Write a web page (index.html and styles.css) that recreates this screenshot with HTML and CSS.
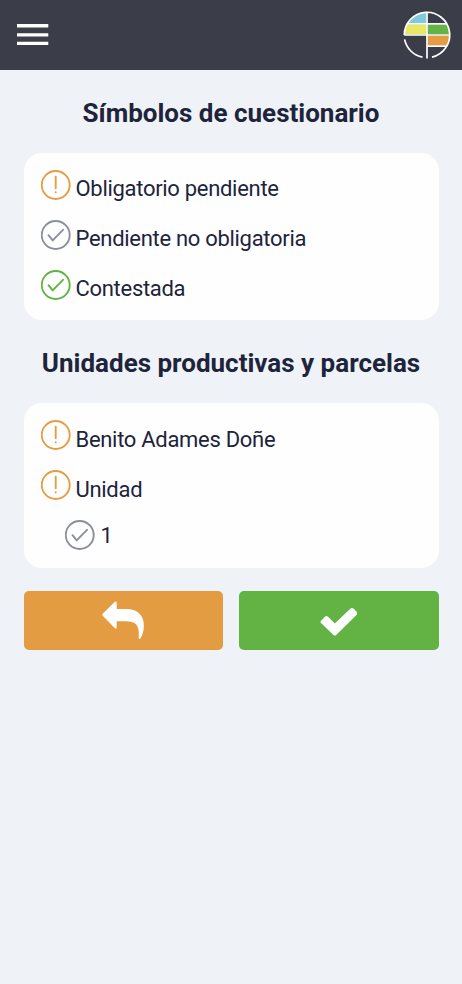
FILE: index.html
```html
<!DOCTYPE html>
<html lang="es">
<head>
<meta charset="utf-8">
<title>Símbolos de cuestionario</title>
<link rel="stylesheet" href="styles.css">
</head>
<body>
<svg class="defs" aria-hidden="true">
  <symbol id="alert" viewBox="0 0 30 30"><circle cx="14.700" cy="15" r="14"/><path d="M14.700 6.800v11.400"/><path d="M14.700 22.200v.2"/></symbol>
  <symbol id="check" viewBox="0 0 30 30"><circle cx="14.700" cy="15" r="14"/><path d="M7.500 15.200l4.200 5.200L22 9.800"/></symbol>
</svg>
<header class="topbar">
  <svg class="menu" viewBox="0 0 32 22"><path d="M0 1.800h31.300M0 10.900h31.300M0 19.400h31.300"/></svg>
  <svg class="logo" viewBox="0 0 48 48">
    <clipPath id="disc"><circle cx="24" cy="24" r="22.500"/></clipPath>
    <g clip-path="url(#disc)">
      <path fill="#7ecbdc" d="M0 0h23.500v12.500H0z"/>
      <path fill="#e9e865" d="M0 13.500h23.500v10H0z"/>
      <path fill="#63b345" d="M24.500 13.500h24v10h-24z"/>
      <path fill="#e69d42" d="M24.500 24.500h24v10h-24z"/>
    </g>
    <path class="logo-lines" d="M1.300 24A22.700 22.700 0 1 1 29 46.100M1.600 28.400A22.700 22.700 0 0 0 19.500 46.200M24 1v46.500M3.500 12.900h41M1.300 24h45.400M24 35.200h19.500"/>
  </svg>
</header>
<main>
  <h1>Símbolos de cuestionario</h1>
  <ul class="card legend">
    <li><svg class="orange"><use href="#alert"/></svg><span>Obligatorio pendiente</span></li>
    <li><svg class="gray"><use href="#check"/></svg><span>Pendiente no obligatoria</span></li>
    <li><svg class="green"><use href="#check"/></svg><span>Contestada</span></li>
  </ul>
  <h1>Unidades productivas y parcelas</h1>
  <ul class="card units">
    <li><svg class="orange"><use href="#alert"/></svg><span>Benito Adames Doñe</span></li>
    <li><svg class="orange"><use href="#alert"/></svg><span>Unidad</span></li>
    <li class="child"><svg class="gray"><use href="#check"/></svg><span>1</span></li>
  </ul>
  <div class="actions">
    <button class="back" aria-label="Volver"><svg viewBox="-0.700 0 44 40"><path d="M1 12.700L13.200.7Q15 0 15 1.800V8H24C36 8 42.200 14 42.200 25C42.200 30 40.500 34.500 38.700 37.500Q37.500 38.500 37 37C38 25 35 20.300 24 20.300H15V26.300Q15 28.500 13.200 27.300L1 14.700Q0 13.700 1 12.700z"/></svg></button>
    <button class="accept" aria-label="Aceptar"><svg viewBox="0.500 1 44 40"><path d="M4.500 20.700L8.700 16.600Q10 15.500 11.300 16.600L18.300 23.600L34 8.500Q35.500 7.400 37 8.500L40.200 11.700Q41.300 13.200 40.200 14.700L19.700 35Q18.300 36 17 35L4.500 23Q3.300 21.900 4.500 20.700z"/></svg></button>
  </div>
</main>
</body>
</html>
```
FILE: styles.css
```css
* { box-sizing: border-box; }
body { margin: 0; min-height: 100vh; background: #eff3f8; color: #20243b; font-family: Roboto, sans-serif; }
.defs { display: none; }
.topbar { height: 70px; padding: 0 11px 0 17px; display: flex; align-items: center; justify-content: space-between; background: #3b3e49; }
.menu { width: 32px; height: 22px; stroke: #fff; stroke-width: 3.4; }
.logo { width: 48px; height: 48px; }
.logo-lines { fill: none; stroke: #fff; stroke-width: 1.7; }
main { padding: 0 23.5px; }
h1 { margin: 0; height: 83px; line-height: 86px; text-align: center; font-size: 26px; font-weight: 700; white-space: nowrap; }
.card { margin: 0; padding: 17px; list-style: none; background: #fffeff; border-radius: 18px; }
.legend { height: 167px; }
.units { height: 165px; }
.card li { display: flex; gap: 5px; height: 50px; font-size: 22px; letter-spacing: -0.3px; line-height: 38px; }
.units li { line-height: 39px; }
.card li.child { padding-left: 24px; gap: 6px; line-height: 31px; }
.card svg { flex: none; width: 30px; height: 30px; fill: none; stroke: currentColor; stroke-width: 1.9; stroke-linecap: round; stroke-linejoin: round; }
.orange { color: #e69d42; }
.gray { color: #8b8f98; }
.green { color: #60b441; }
.actions { display: grid; grid-template-columns: 1fr 1fr; gap: 16px; margin-top: 23px; }
.actions button { height: 59px; border: 0; border-radius: 5px; padding: 0; display: flex; align-items: center; justify-content: center; }
.actions svg { width: 44px; height: 40px; fill: #fff; }
.back { background: #e39c41; }
.accept { background: #63b344; }
```
